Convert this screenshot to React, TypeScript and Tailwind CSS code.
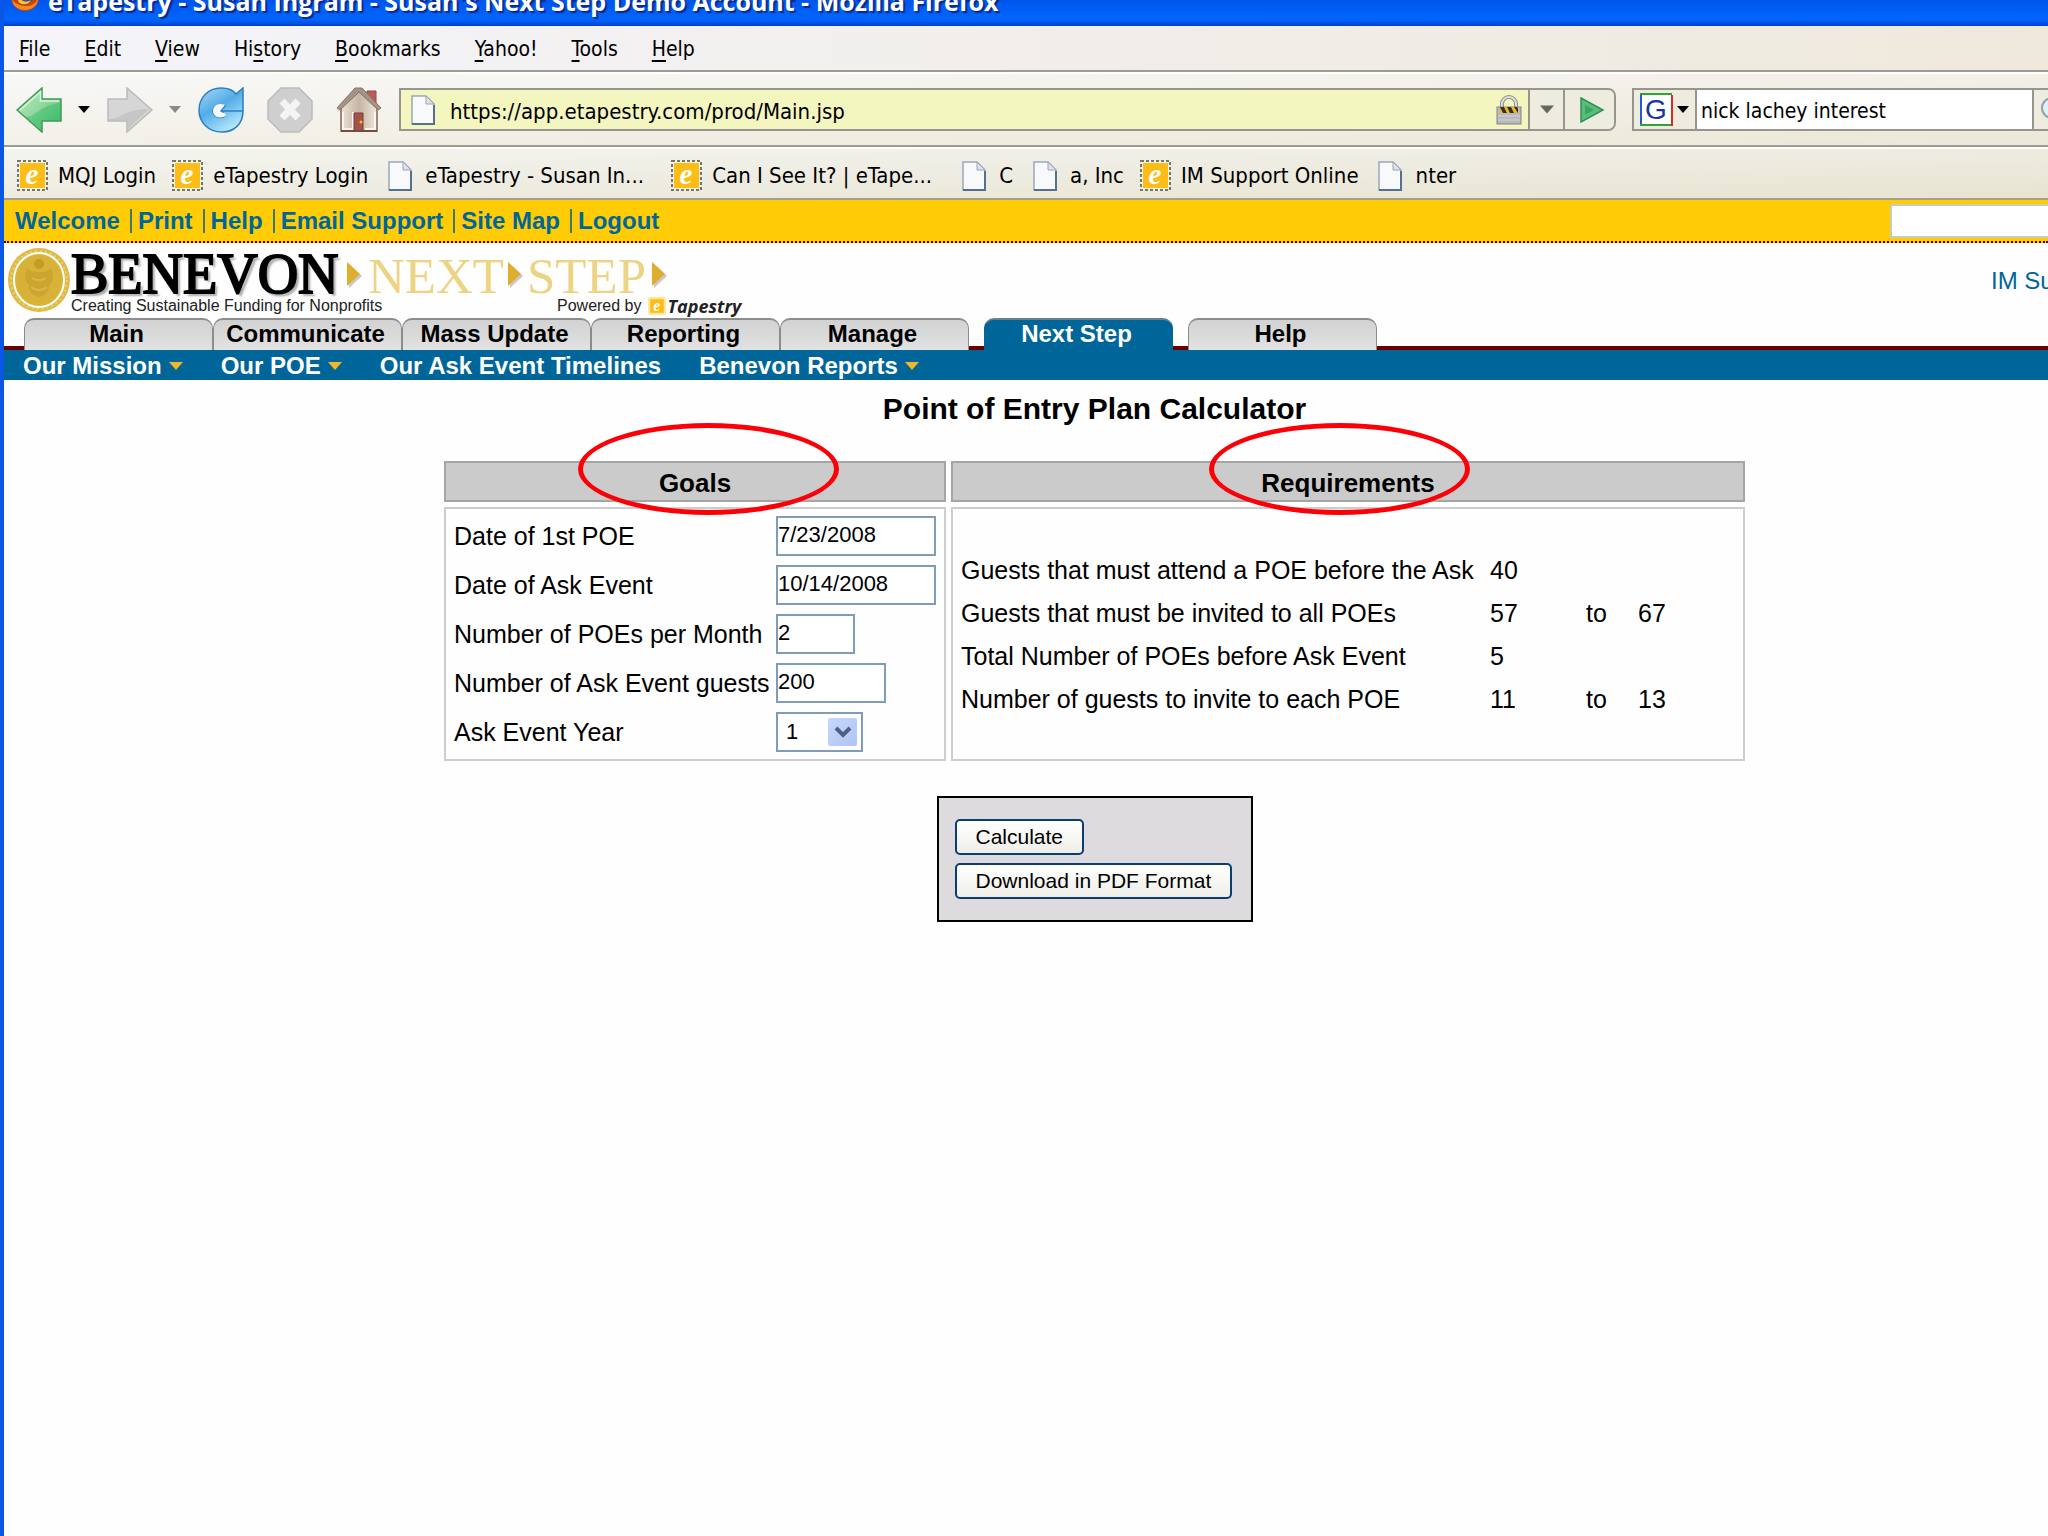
import type { ReactNode } from "react";

/* ============================== */
/* TYPES + DATA                   */
/* ============================== */

type Bookmark = { label: string; icon: "stamp" | "page"; width?: string };
type Tab = { label: string; active?: boolean; className: string };

const menus = ["File", "Edit", "View", "History", "Bookmarks", "Yahoo!", "Tools", "Help"];

// index of the underlined access key in each menu label
const accessKey: Record<string, number> = { History: 2 };

// shortened labels take the full bookmark width
const bookmarks: Bookmark[] = [
  { label: "MQJ Login", icon: "stamp" },
  { label: "eTapestry Login", icon: "stamp" },
  { label: "eTapestry - Susan In...", icon: "page", width: "w-[272px]" },
  { label: "Can I See It? | eTape...", icon: "stamp", width: "w-[272px]" },
  { label: "C", icon: "page" },
  { label: "a, Inc", icon: "page" },
  { label: "IM Support Online", icon: "stamp" },
  { label: "nter", icon: "page" },
];

const topLinks = ["Welcome", "Print", "Help", "Email Support", "Site Map", "Logout"];

const tabs: Tab[] = [
  { label: "Main", className: "" },
  { label: "Communicate", className: "" },
  { label: "Mass Update", className: "" },
  { label: "Reporting", className: "" },
  { label: "Manage", className: "" },
  { label: "Next Step", active: true, className: "ml-[15px]" },
  { label: "Help", className: "ml-[15px]" },
];

const subNav = [
  { label: "Our Mission", menu: true },
  { label: "Our POE", menu: true },
  { label: "Our Ask Event Timelines", menu: false },
  { label: "Benevon Reports", menu: true },
];

const goals = [
  { id: "poe-date", label: "Date of 1st POE", value: "7/23/2008", width: "w-[160px]" },
  { id: "ask-date", label: "Date of Ask Event", value: "10/14/2008", width: "w-[160px]" },
  { id: "poe-month", label: "Number of POEs per Month", value: "2", width: "w-[79px]" },
  { id: "ask-guests", label: "Number of Ask Event guests", value: "200", width: "w-[110px]" },
];

const requirements = [
  { label: "Guests that must attend a POE before the Ask", from: "40", to: "" },
  { label: "Guests that must be invited to all POEs", from: "57", to: "67" },
  { label: "Total Number of POEs before Ask Event", from: "5", to: "" },
  { label: "Number of guests to invite to each POE", from: "11", to: "13" },
];

/* ============================== */
/* ICONS                          */
/* ============================== */

function Caret({ className }: { className: string }) {
  return (
    <svg viewBox="0 0 12 7" className={className} aria-hidden="true">
      <path d="M0 0h12L6 7z" fill="currentColor" />
    </svg>
  );
}

function FirefoxIcon() {
  return (
    <svg viewBox="0 0 30 30" className="h-[30px] w-[30px] shrink-0" aria-hidden="true">
      <circle cx="15" cy="15" r="14" fill="#c8440c" />
      <path d="M2 18a13 11 0 0 0 26-2c-2 6-7 8-11 8S6 23 2 18z" fill="#f58a1f" />
      <circle cx="16" cy="13" r="8" fill="#2c4fa8" />
      <path d="M9 12c1 8 7 9 12 6-2 5-10 6-13 1z" fill="#fbc23c" />
    </svg>
  );
}

function BackIcon() {
  return (
    <svg viewBox="0 0 46 46" className="h-[46px] w-[46px]" aria-hidden="true">
      <defs>
        <linearGradient id="back" x1="0" y1="0" x2="1" y2="1">
          <stop offset="0" stopColor="#c4ecc4" />
          <stop offset="0.5" stopColor="#8ed79c" />
          <stop offset="1" stopColor="#3fb062" />
        </linearGradient>
      </defs>
      <path d="M1 23 26 1v11h19v22H26v11z" fill="url(#back)" stroke="#3c9a56" strokeWidth="1.5" />
      <path d="M10 30c10 0 14-12 34-14v17H25v10z" fill="#35c06c" opacity="0.5" />
      <path d="M4 23 24.5 5v9H43" fill="none" stroke="#d9f5d9" strokeWidth="1.5" />
    </svg>
  );
}

function ForwardIcon() {
  return (
    <svg viewBox="0 0 46 46" className="h-[46px] w-[46px]" aria-hidden="true">
      <path d="M45 23 20 1v11H1v22h19v11z" fill="#d6d6d6" stroke="#bababa" strokeWidth="1.5" />
      <path d="M2 32c12 0 16-10 40-10L21 42v-9H2z" fill="#c6c6c6" />
    </svg>
  );
}

function ReloadIcon() {
  return (
    <svg viewBox="0 0 46 46" className="h-[46px] w-[46px]" aria-hidden="true">
      <defs>
        <linearGradient id="reload" x1="0" y1="0" x2="0.6" y2="1">
          <stop offset="0" stopColor="#a9d8f6" />
          <stop offset="0.5" stopColor="#53ace6" />
          <stop offset="1" stopColor="#b4e6fb" />
        </linearGradient>
      </defs>
      <path
        d="M45 1v23H22l5-5c-7-3-12 1-12 5 0 6 7 8 12 5l-3-5h21c0 13-9 21-21 21C10 45 1 35 1 23S10 1 23 1c7 0 12 2 15 6z"
        fill="url(#reload)"
        stroke="#2b7fc4"
        strokeWidth="1.5"
      />
      <path d="M27 18c-7-3-12 1-12 6 0 6 7 8 13 5l-1-3c-3 0-5-1-5-2z" fill="#f6fafc" />
    </svg>
  );
}

function StopIcon() {
  return (
    <svg viewBox="0 0 46 46" className="h-[46px] w-[46px]" aria-hidden="true">
      <path d="M14 1h18l13 13v18L32 45H14L1 32V14z" fill="#cfcfcf" stroke="#bcbcbc" strokeWidth="1.5" />
      <path d="M15 14l16 17M31 14 15 31" stroke="#f4f4f4" strokeWidth="7" />
    </svg>
  );
}

function HomeIcon() {
  return (
    <svg viewBox="0 0 46 46" className="h-[46px] w-[46px]" aria-hidden="true">
      <defs>
        <linearGradient id="wall" x1="0" y1="0" x2="1" y2="0">
          <stop offset="0" stopColor="#ece2d6" />
          <stop offset="0.5" stopColor="#c5b5a4" />
          <stop offset="1" stopColor="#efe6dc" />
        </linearGradient>
      </defs>
      <path d="M31 4h9v13l-9-7z" fill="#c05a58" stroke="#8f4b48" />
      <path d="M5 21 22.5 3 41 21v23H5z" fill="url(#wall)" stroke="#8a6657" strokeWidth="1.5" />
      <path d="M1 21 19 1h7l19 20-3 2L23 5 4 23z" fill="#a69388" stroke="#86736a" />
      <path d="M7 25v17h10V25M39 25v17H29" fill="none" stroke="#fbf7f0" strokeWidth="2" />
      <path d="M18 26h9v18h-9z" fill="#a4524a" stroke="#763a34" />
      <circle cx="25" cy="35" r="1.5" fill="#f3c218" />
      <path d="M5 44h36" stroke="#7b4a3a" strokeWidth="2" />
    </svg>
  );
}

function PageIcon({ className }: { className: string }) {
  return (
    <svg viewBox="0 0 24 30" className={className} aria-hidden="true">
      <path d="M1 1h14l8 8v20H1z" fill="#f8f9fb" stroke="#9aa6b8" strokeWidth="1.5" />
      <path d="M15 1v8h8z" fill="#dfe2e8" stroke="#9aa6b8" />
      <path d="M1 29h22V10" fill="none" stroke="#56708f" strokeWidth="2" />
    </svg>
  );
}

function StampIcon({ className, plain }: { className: string; plain?: boolean }) {
  return (
    <svg viewBox="0 0 33 33" className={className} aria-hidden="true">
      {plain ? (
        <rect width="33" height="33" rx="4" fill="#fbe7a0" />
      ) : (
        <rect x="2" y="2" width="29" height="29" fill="#fbf6e6" stroke="#7b7468" strokeWidth="2" strokeDasharray="3 2" />
      )}
      <rect x="4" y="4" width="25" height="25" fill="#fdbd16" />
      <text
        x="16"
        y="25"
        textAnchor="middle"
        fontFamily="'Liberation Serif', serif"
        fontSize="29"
        fontWeight="bold"
        fontStyle="italic"
        fill="#fff"
      >
        e
      </text>
    </svg>
  );
}

function LockIcon() {
  return (
    <svg viewBox="0 0 26 30" className="h-[30px] w-[26px] shrink-0" aria-hidden="true">
      <path d="M6 14V9a7 7 0 0 1 14 0v5" fill="none" stroke="#8d8d8d" strokeWidth="4" />
      <path d="M6 14V9a7 7 0 0 1 14 0v5" fill="none" stroke="#dcdcdc" strokeWidth="2" />
      <rect x="1" y="12" width="24" height="17" fill="#b9b9bd" stroke="#828288" />
      <rect x="4" y="12" width="18" height="6" fill="#f0b81e" />
      <path d="M4 12h4l3 6H7zM11 12h4l3 6h-4zM18 12h3l1 2v4z" fill="#33302a" />
      <path d="M2 21h22M2 25h22" stroke="#d4d4d8" />
    </svg>
  );
}

function GoIcon() {
  return (
    <svg viewBox="0 0 26 26" className="h-[26px] w-[26px]" aria-hidden="true">
      <path d="M2 1 24 13 2 25z" fill="#5bbd7c" stroke="#2f9150" strokeWidth="1.5" />
      <path d="M6 8v10l9-5z" fill="#3da563" />
    </svg>
  );
}

function GoogleIcon() {
  return (
    <svg viewBox="0 0 33 33" className="h-[33px] w-[33px]" aria-hidden="true">
      <rect width="33" height="33" fill="#fff" />
      <path d="M1 33V1" stroke="#2458d8" strokeWidth="2" />
      <path d="M0 1h32M0 32h32" stroke="#2fa336" strokeWidth="2" />
      <path d="M32 2v31" stroke="#e02a1d" strokeWidth="2" />
      <text x="16" y="26" textAnchor="middle" fontFamily="'Liberation Sans', sans-serif" fontSize="28" fill="#1b32a8">
        G
      </text>
    </svg>
  );
}

function SealIcon() {
  return (
    <svg viewBox="0 0 64 66" className="h-[66px] w-[64px] shrink-0" aria-hidden="true">
      <ellipse cx="32" cy="33" rx="31" ry="32" fill="#dfbb45" />
      <ellipse cx="32" cy="33" rx="28" ry="29" fill="none" stroke="#e9cf7a" strokeWidth="2" strokeDasharray="2 3" />
      <ellipse cx="32" cy="33" rx="25" ry="27" fill="#d9b437" stroke="#fff" strokeWidth="2" />
      <ellipse cx="32" cy="33" rx="22" ry="23" fill="#d6b236" />
      <circle cx="32" cy="17" r="5" fill="#c39c26" />
      <path
        d="M20 21c3 4 7 4 12 4s9 0 12-4c3 8 2 14-2 17 1 6-4 11-10 12-6-1-11-6-10-12-4-3-5-9-2-17z"
        fill="#cba52f"
      />
      <path d="M25 31c4 3 10 3 14 0M24 40c5 4 11 4 16 0" fill="none" stroke="#d9b84a" strokeWidth="2" />
    </svg>
  );
}

function LogoArrow() {
  return (
    <svg viewBox="0 0 15 26" className="h-[26px] w-[15px] shrink-0" aria-hidden="true">
      <path d="M2 2l13 12L2 26z" fill="#c9c9c9" />
      <path d="M0 0l13 12L0 24z" fill="#dfae2f" />
    </svg>
  );
}

/* ============================== */
/* BROWSER CHROME                 */
/* ============================== */

function BrowserChrome() {
  return (
    <header className="font-['DejaVu_Sans_Condensed','DejaVu_Sans',sans-serif] text-[22px] text-black">
      <div className="flex h-[26px] items-end gap-2 overflow-hidden bg-linear-to-b from-[#0055ea] via-[#0066ff] via-75% to-[#0040cf] pl-1.5">
        <div className="mb-3.5">
          <FirefoxIcon />
        </div>
        <p className="mb-2.5 font-['Open_Sans',sans-serif] text-[25px] leading-[30px] font-bold whitespace-nowrap text-white [text-shadow:2px_2px_1px_#0a2a8c]">
          eTapestry - Susan Ingram - Susan's Next Step Demo Account - Mozilla Firefox
        </p>
      </div>

      <nav className="flex h-[46px] items-center gap-[34px] border-b-2 border-[#9c9c90] bg-linear-to-r from-[#f4f4fa] to-[#efe9dc] pt-0.5 pl-[15px] text-[21px]">
        {menus.map((name) => {
          const at = accessKey[name] ?? 0;
          return (
            <button key={name} type="button" className="leading-7">
              {name.slice(0, at)}
              <span className="underline decoration-2 underline-offset-4">{name[at]}</span>
              {name.slice(at + 1)}
            </button>
          );
        })}
      </nav>

      <div className="flex h-[75px] items-center overflow-hidden border-t-2 border-b-2 border-t-white border-b-[#9c9c90] bg-linear-to-br from-[#f8f8f7] to-[#ece8d8] pl-3">
        <button type="button" aria-label="Back" className="shrink-0">
          <BackIcon />
        </button>
        <button type="button" aria-label="Back history" className="ml-4 shrink-0">
          <Caret className="h-[7px] w-3" />
        </button>
        <button type="button" aria-label="Forward" className="ml-[17px] shrink-0">
          <ForwardIcon />
        </button>
        <button type="button" aria-label="Forward history" className="ml-4 shrink-0 text-[#8a8a8a]">
          <Caret className="h-[7px] w-3" />
        </button>
        <button type="button" aria-label="Reload" className="ml-[17px] shrink-0">
          <ReloadIcon />
        </button>
        <button type="button" aria-label="Stop" className="ml-[23px] shrink-0">
          <StopIcon />
        </button>
        <button type="button" aria-label="Home" className="ml-[23px] shrink-0">
          <HomeIcon />
        </button>

        <div className="ml-[17px] flex h-[43px] grow items-stretch overflow-hidden rounded-r-lg border-2 border-[#96968e]">
          <label className="flex grow items-center bg-[#f4f6c0] pr-1.5 pl-2.5">
            <PageIcon className="h-[30px] w-6 shrink-0" />
            <input
              aria-label="Address"
              defaultValue="https://app.etapestry.com/prod/Main.jsp"
              className="ml-[15px] min-w-0 grow bg-transparent pt-1 outline-none"
            />
            <LockIcon />
          </label>
          <button
            type="button"
            aria-label="Show addresses"
            className="flex w-[35px] items-center justify-center border-l-2 border-[#96968e] bg-[#eeecdf] text-[#66665e]"
          >
            <Caret className="h-[9px] w-3.5" />
          </button>
          <button
            type="button"
            aria-label="Go"
            className="flex w-[51px] items-center justify-center border-l-2 border-[#96968e] bg-[#eeecdf] pl-1"
          >
            <GoIcon />
          </button>
        </div>

        <div className="ml-4 flex h-[43px] w-[416px] shrink-0 items-stretch overflow-hidden border-2 border-r-0 border-[#96968e]">
          <button
            type="button"
            aria-label="Search engine"
            className="flex w-[63px] shrink-0 items-center gap-1 border-r-2 border-[#96968e] bg-[#eeecdf] pl-1.5"
          >
            <GoogleIcon />
            <Caret className="h-[7px] w-3" />
          </button>
          <input
            aria-label="Search"
            defaultValue="nick lachey interest"
            className="min-w-0 grow border-r-2 border-[#96968e] bg-white pt-1 pl-1 text-[21px] outline-none"
          />
          <span className="flex w-3.5 shrink-0 items-center overflow-hidden bg-[#eeecdf] pl-1.5">
            <svg viewBox="0 0 26 26" className="h-[26px] w-[26px] shrink-0" aria-hidden="true">
              <circle cx="12" cy="11" r="10" fill="#dff0f4" stroke="#8fa3a8" strokeWidth="2" />
            </svg>
          </span>
        </div>
      </div>

      <nav className="flex h-[53px] items-center gap-[15px] overflow-hidden border-t-2 border-b-2 border-t-white border-b-[#a5a08c] bg-linear-to-br from-[#f4f4f0] to-[#e8e4d2] pt-1 pl-3">
        {bookmarks.map((b) => (
          <a
            key={b.label}
            href="#"
            className={`flex shrink-0 items-center gap-[9px] whitespace-nowrap ${b.width ?? ""}`}
          >
            <span className="flex w-[33px] justify-center">
              {b.icon === "stamp" ? <StampIcon className="h-[33px] w-[33px]" /> : <PageIcon className="h-[30px] w-6" />}
            </span>
            {b.label}
          </a>
        ))}
      </nav>
    </header>
  );
}

/* ============================== */
/* SITE HEADER                    */
/* ============================== */

function SiteHeader() {
  return (
    <div>
      <div className="flex h-[43px] items-center justify-between overflow-hidden border-b-2 border-dotted border-[#660000] bg-[#ffcc05] pl-[11px] text-2xl font-bold text-[#006699]">
        <nav className="flex items-center">
          {topLinks.map((name, i) => (
            <span key={name} className="flex items-center">
              {i > 0 && <span className="mr-1.5 ml-2.5 h-6 w-0.5 bg-[#3d7a6c]" />}
              <a href="#">{name}</a>
            </span>
          ))}
        </nav>
        <input aria-label="Find" className="h-[34px] w-[158px] border-2 border-r-0 border-[#c8cdb8] bg-white" />
      </div>

      <div className="flex items-start overflow-hidden pl-[3px]">
        <div className="pt-1">
          <SealIcon />
        </div>
        <div className="pt-2.5 pb-[3px]">
          <p className="flex h-11 items-baseline font-['Liberation_Serif',serif] text-[51px] leading-[43px] whitespace-nowrap text-[#edd384]">
            <span className="w-[276px] text-[56px] text-black [-webkit-text-stroke:2px_black] [text-shadow:3px_3px_2px_#aaa]">
              BENEVON
            </span>
            <span className="mr-1.5 self-center">
              <LogoArrow />
            </span>
            <span>NEXT</span>
            <span className="mx-1 self-center">
              <LogoArrow />
            </span>
            <span>STEP</span>
            <span className="ml-1.5 self-center">
              <LogoArrow />
            </span>
          </p>
          <p className="flex h-[18px] items-center text-base leading-[18px] whitespace-nowrap text-[#222]">
            <span className="w-[486px]">Creating Sustainable Funding for Nonprofits</span>
            <span>Powered by</span>
            <StampIcon plain className="ml-1.5 h-[18px] w-[18px]" />
            <b className="ml-0.5 font-['Open_Sans',sans-serif] text-lg leading-[18px] italic">Tapestry</b>
          </p>
        </div>
        <a href="#" className="mt-[22px] ml-auto w-[57px] shrink-0 overflow-hidden text-2xl whitespace-nowrap text-[#006699]">
          IM Su
        </a>
      </div>

      <nav className="flex h-8 overflow-hidden bg-[linear-gradient(to_top,#6b0000_4px,transparent_4px)] pl-5">
        {tabs.map((t) => (
          <a
            key={t.label}
            href="#"
            className={`flex w-[189px] shrink-0 items-start justify-center rounded-t-[10px] border-x border-t-2 pr-1 text-2xl leading-7 font-bold ${t.className} ${
              t.active
                ? "border-x-[#006699] border-t-[#6b7f86] bg-[#006699] text-white"
                : "border-[#8c8c8c] bg-linear-to-b from-[#d2d2d2] to-[#e2e2e2] text-black"
            }`}
          >
            {t.label}
          </a>
        ))}
      </nav>

      <nav className="flex h-[30px] items-center gap-[38px] overflow-hidden bg-[#006699] pt-0.5 pl-[19px] text-2xl leading-7 font-bold text-white">
        {subNav.map((s) => (
          <a key={s.label} href="#" className="flex items-center gap-[7px] whitespace-nowrap">
            {s.label}
            {s.menu && <Caret className="h-2.5 w-3.5 text-[#f0b822]" />}
          </a>
        ))}
      </nav>
    </div>
  );
}

/* ============================== */
/* CALCULATOR                     */
/* ============================== */

function PanelHeader({ children, ring }: { children: ReactNode; ring: string }) {
  return (
    <h2 className="relative flex h-[41px] items-center justify-center border-2 border-[#a5a5a5] bg-[#cbcbcb] pt-0.5 text-[26px] leading-8 font-bold">
      {children}
      <span className={`absolute -top-10 h-[92px] w-[261px] rounded-[50%] border-5 border-[#fb0007] ${ring}`} />
    </h2>
  );
}

function Calculator() {
  return (
    <main className="flex flex-col items-center pt-[11px] pl-[137px] text-[25px] leading-8">
      <h1 className="text-[30px] leading-9 font-bold">Point of Entry Plan Calculator</h1>

      <form className="mt-[34px] flex flex-col items-center">
        <div className="flex gap-[5px]">
          <section className="flex w-[502px] flex-col gap-[5px]">
            <PanelHeader ring="left-[132px]">Goals</PanelHeader>
            <div className="flex grow flex-col gap-[9px] border-2 border-[#cdcdcd] px-2 py-[7px]">
              {goals.map((g) => (
                <div key={g.id} className="flex items-center">
                  <label htmlFor={g.id} className="w-[322px] whitespace-nowrap">
                    {g.label}
                  </label>
                  <input
                    id={g.id}
                    defaultValue={g.value}
                    className={`h-10 border-2 border-[#7f9db9] bg-white pb-0.5 text-[22px] ${g.width}`}
                  />
                </div>
              ))}
              <div className="flex items-center">
                <label htmlFor="ask-year" className="w-[322px]">
                  Ask Event Year
                </label>
                <div className="relative">
                  <select
                    id="ask-year"
                    className="h-10 w-[87px] appearance-none border-2 border-[#7f9db9] bg-white pl-2 text-[22px]"
                  >
                    <option>1</option>
                  </select>
                  <span className="pointer-events-none absolute top-1.5 right-1.5 flex h-7 w-[29px] items-center justify-center rounded-xs bg-linear-to-br from-[#c8d8fb] to-[#adc4f3]">
                    <svg viewBox="0 0 18 12" className="h-3 w-[18px]" aria-hidden="true">
                      <path d="M2 2l7 7 7-7" fill="none" stroke="#4d6185" strokeWidth="4" />
                    </svg>
                  </span>
                </div>
              </div>
            </div>
          </section>

          <section className="flex w-[794px] flex-col gap-[5px]">
            <PanelHeader ring="left-[256px]">Requirements</PanelHeader>
            <div className="flex grow flex-col justify-center border-2 border-[#cdcdcd] pl-2">
              <table className="w-full table-fixed text-left">
                <tbody>
                  {requirements.map((r) => (
                    <tr key={r.label} className="h-[43px]">
                      <th scope="row" className="w-[529px] font-normal whitespace-nowrap">
                        {r.label}
                      </th>
                      <td className="w-24">{r.from}</td>
                      <td className="w-[52px]">{r.to && "to"}</td>
                      <td>{r.to}</td>
                    </tr>
                  ))}
                </tbody>
              </table>
            </div>
          </section>
        </div>

        <div className="mt-[35px] flex w-[316px] flex-col items-start gap-2 border-2 border-black bg-[#dddbde] px-4 py-[21px]">
          {["Calculate", "Download in PDF Format"].map((name) => (
            <button
              key={name}
              type="button"
              className="h-9 rounded-[5px] border-2 border-[#0c3c74] bg-linear-to-b from-white to-[#efeee8] px-[19px] text-[21px] leading-7 whitespace-nowrap"
            >
              {name}
            </button>
          ))}
        </div>
      </form>
    </main>
  );
}

export default function App() {
  return (
    <div className="min-h-screen overflow-hidden border-l-4 border-[#0a57e6] bg-[#fefefe] font-['Liberation_Sans',Arial,sans-serif] text-black">
      <BrowserChrome />
      <SiteHeader />
      <Calculator />
    </div>
  );
}
